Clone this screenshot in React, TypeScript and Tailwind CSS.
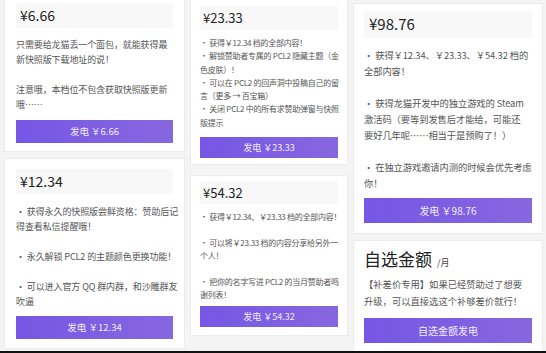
import React from "react";

const font = { fontFamily: '"Noto Sans CJK SC", "Noto Sans", sans-serif' };

function Lines({ lines, cls }: { lines: string[]; cls: string }) {
  return (
    <div className={cls}>
      {lines.map((l, i) => (
        <div key={i} className="whitespace-nowrap">
          {l === "" ? "\u00a0" : l}
        </div>
      ))}
    </div>
  );
}

export default function App() {
  return (
    <div
      className="relative w-[546px] h-[353px] overflow-hidden bg-[#f4f4f4]"
      style={font}
    >
      <div className="flex items-start">
        {/* Column 1 */}
        <div className="ml-[4px] w-[181px] flex flex-col gap-[6px] mt-[-6px]">
          <div className="bg-white border border-[#ebebeb] px-[11px] pt-[8px] pb-[8px]">
            <div className="h-[25px] bg-[#f8f8f8] flex items-center px-[4px] text-[14px] text-[#222]">
              ¥6.66
            </div>
            <Lines
              cls="mt-[9px] text-[9px] leading-[15px] text-[#555] tracking-[-0.1px]"
              lines={[
                "只需要给龙猫丢一个面包，就能获得最",
                "新快照版下载地址的说！",
                "",
                "注意哦，本档位不包含获取快照版更新",
                "哦……",
              ]}
            />
            <div className="mt-[8px] h-[23px] bg-gradient-to-r from-[#7656e4] to-[#8767df] flex items-center justify-center text-[9.5px] text-[#f1ecff]">
              发电 ￥6.66
            </div>
          </div>
          <div className="bg-white border border-[#ebebeb] px-[11px] pt-[10px] pb-[9px]">
            <div className="h-[25px] bg-[#f8f8f8] flex items-center px-[4px] text-[14px] text-[#222]">
              ¥12.34
            </div>
            <Lines
              cls="mt-[10px] text-[9px] leading-[15px] text-[#555] tracking-[-0.1px]"
              lines={[
                "· 获得永久的快照版尝鲜资格：赞助后记",
                "得查看私信提醒哦！",
                "",
                "· 永久解锁 PCL2 的主题颜色更换功能！",
                "",
                "· 可以进入官方 QQ 群内群，和沙雕群友",
                "吹逼",
              ]}
            />
            <div className="mt-[7px] h-[23px] bg-gradient-to-r from-[#7656e4] to-[#8767df] flex items-center justify-center text-[9.5px] text-[#f1ecff]">
              发电 ￥12.34
            </div>
          </div>
        </div>

        {/* Column 2 */}
        <div className="ml-[5px] w-[158px] flex flex-col gap-[10px] mt-[-4px]">
          <div className="bg-white border border-[#ebebeb] px-[9px] pt-[9px] pb-[6px]">
            <div className="h-[24px] bg-[#f8f8f8] flex items-center px-[3px] text-[13px] text-[#222]">
              ¥23.33
            </div>
            <Lines
              cls="mt-[6px] text-[8px] leading-[13.3px] text-[#555] tracking-[-0.25px]"
              lines={[
                "· 获得￥12.34 档的全部内容！",
                "· 解锁赞助者专属的 PCL2 隐藏主题（金",
                "色皮肤）！",
                "· 可以在 PCL2 的回声洞中投稿自己的留",
                "言（更多 → 百宝箱）",
                "· 关闭 PCL2 中的所有求赞助弹窗与快照",
                "版提示",
              ]}
            />
            <div className="mt-[8px] h-[21px] bg-gradient-to-r from-[#7656e4] to-[#8767df] flex items-center justify-center text-[9px] text-[#f1ecff]">
              发电 ￥23.33
            </div>
          </div>
          <div className="bg-white border border-[#ebebeb] px-[9px] pt-[5px] pb-[8px]">
            <div className="h-[23px] bg-[#f8f8f8] flex items-center px-[3px] text-[13px] text-[#222]">
              ¥54.32
            </div>
            <Lines
              cls="mt-[6px] text-[8px] leading-[13px] text-[#555] tracking-[-0.25px]"
              lines={[
                "· 获得￥12.34、￥23.33 档的全部内容！",
                "",
                "· 可以将￥23.33 档的内容分享给另外一",
                "个人！",
                "",
                "· 把你的名字写进 PCL2 的当月赞助者鸣",
                "谢列表！",
              ]}
            />
            <div className="mt-[5px] h-[21px] bg-gradient-to-r from-[#7656e4] to-[#8767df] flex items-center justify-center text-[9px] text-[#f1ecff]">
              发电 ￥54.32
            </div>
          </div>
        </div>

        {/* Column 3 */}
        <div className="ml-[5px] w-[190px] flex flex-col gap-[6px] mt-[3px]">
          <div className="bg-white border border-[#ebebeb] px-[10px] pt-[7px] pb-[10px]">
            <div className="h-[27px] bg-[#f8f8f8] flex items-center px-[5px] text-[15px] text-[#222]">
              ¥98.76
            </div>
            <Lines
              cls="mt-[9px] text-[9.3px] leading-[16px] text-[#555] tracking-[-0.1px]"
              lines={[
                "· 获得￥12.34、￥23.33、￥54.32 档的",
                "全部内容！",
                "",
                "· 获得龙猫开发中的独立游戏的 Steam",
                "激活码（要等到发售后才能给，可能还",
                "要好几年呢……相当于是预购了！）",
                "",
                "· 在独立游戏邀请内测的时候会优先考虑",
                "你！",
              ]}
            />
            <div className="mt-[7px] h-[25px] bg-gradient-to-r from-[#7656e4] to-[#8767df] flex items-center justify-center text-[10px] text-[#f1ecff]">
              发电 ￥98.76
            </div>
          </div>
          <div className="bg-white border border-[#ebebeb] px-[10px] pt-[7px] pb-[8px]">
            <div className="flex items-baseline text-[#222]">
              <span className="text-[17px] leading-[22px]">自选金额</span>
              <span className="ml-[5px] text-[9px] text-[#444]">/月</span>
            </div>
            <Lines
              cls="mt-[6px] text-[9.3px] leading-[17px] text-[#555]"
              lines={[
                "【补差价专用】如果已经赞助过了想要",
                "升级，可以直接选这个补够差价就行！",
              ]}
            />
            <div className="mt-[8px] h-[25px] bg-gradient-to-r from-[#7656e4] to-[#8767df] flex items-center justify-center text-[10px] text-[#f1ecff]">
              自选金额发电
            </div>
          </div>
        </div>
      </div>
      <div className="absolute left-0 bottom-0 w-full h-[2px] bg-[#111]" />
    </div>
  );
}
